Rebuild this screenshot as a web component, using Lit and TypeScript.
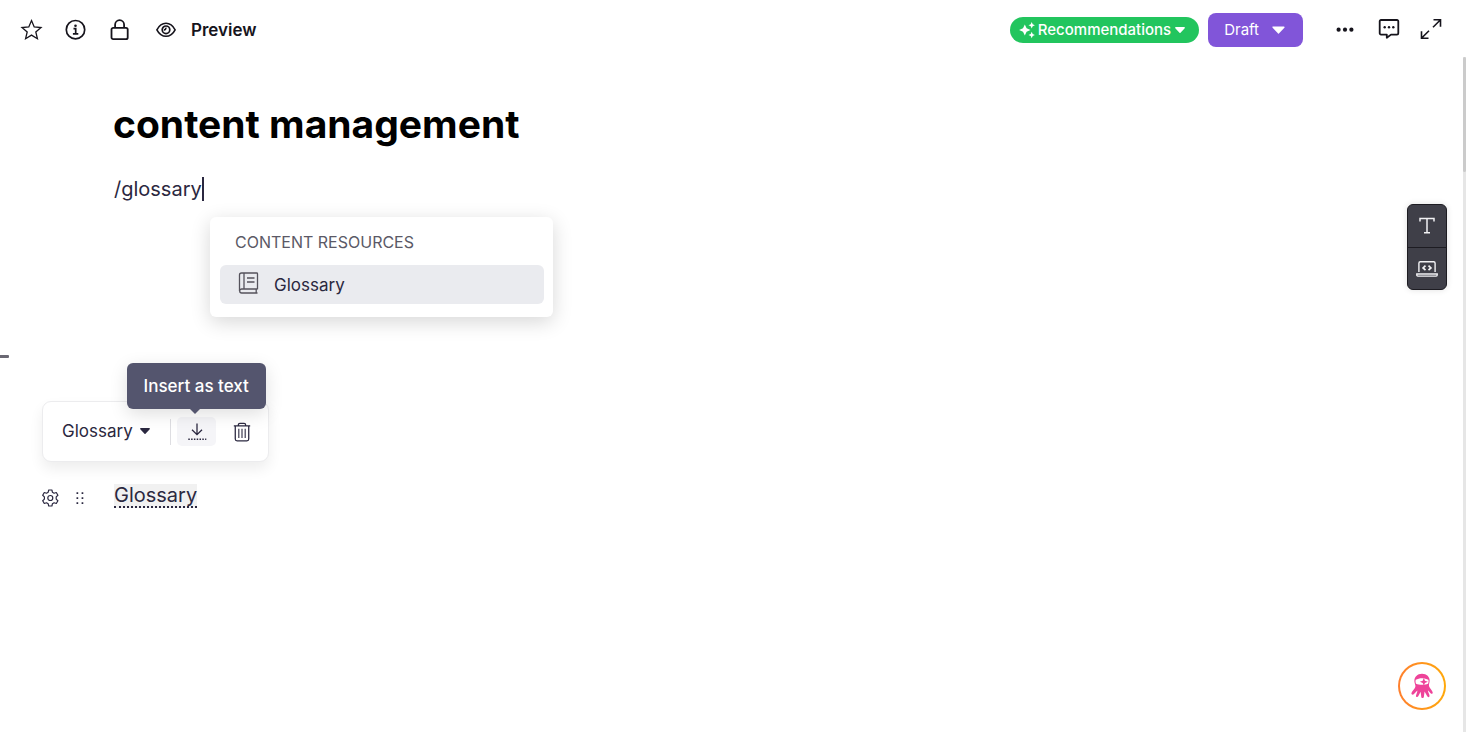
import { LitElement, html, css, svg } from "lit";
import { customElement, property, state } from "lit/decorators.js";

const glyphs: Record<string, { box: string; body: unknown }> = {
  star: {
    box: "0 0 22 22",
    body: svg`<path d="M10.500 1.600l2.700 6.300 6.800.6-5.200 4.500 1.600 6.700-5.900-3.600-5.900 3.600 1.600-6.700L1 8.500l6.800-.6z" stroke-width="1.300"/>`,
  },
  info: {
    box: "0 0 22 22",
    body: svg`<circle cx="10.500" cy="10.700" r="9.200" stroke-width="1.700"/><path d="M8.500 9.700h2.200v5M7.900 14.800h5.400" stroke-width="1.700"/><circle cx="10.500" cy="6.700" r="1.300" fill="currentColor" stroke="none"/>`,
  },
  lock: {
    box: "0 0 22 22",
    body: svg`<rect x="2.500" y="8.800" width="16.200" height="11.400" rx="1.700" stroke-width="1.800"/><path d="M6.100 8.700V5.700a4.500 4.500 0 0 1 9 0v3" stroke-width="1.800"/>`,
  },
  eye: {
    box: "0 0 22 22",
    body: svg`<path d="M1.900 10.800C4 6.800 7.200 4.300 11 4.300s7 2.500 9.100 6.500c-2.100 4-5.300 6.500-9.100 6.500s-7-2.500-9.100-6.500z" stroke-width="1.600"/><circle cx="11" cy="10.800" r="3.800" stroke-width="1.700"/><path d="M10.700 8.600a1.600 1.600 0 0 1-1.900 2.200" stroke-width="1.600"/>`,
  },
  sparkle: {
    box: "0 0 16 16",
    body: svg`<g fill="currentColor" stroke="none"><path d="M5.800 2.400l1.800 3.900L11.500 8 7.600 9.700 5.800 13.600 4 9.700.1 8 4 6.300z"/><path d="M12.700 0l1 2.200 2.200 1-2.200 1-1 2.200-1-2.200-2.200-1 2.200-1zM12.700 9.800l1 2.200 2.200 1-2.200 1-1 2.200-1-2.200-2.200-1 2.200-1z"/></g>`,
  },
  caret: {
    box: "0 0 12 8",
    body: svg`<path d="M1.800 1.800h8.400L6 6.200z" fill="currentColor" stroke-width="1.400" stroke-linejoin="round"/>`,
  },
  dots: {
    box: "0 0 22 22",
    body: svg`<g fill="currentColor" stroke="none"><circle cx="4.600" cy="10.700" r="2.100"/><circle cx="11" cy="10.700" r="2.100"/><circle cx="17.400" cy="10.700" r="2.100"/></g>`,
  },
  comment: {
    box: "-1 1 22 22",
    body: svg`<path d="M3 2h16a1.300 1.300 0 0 1 1.300 1.300v12A1.300 1.300 0 0 1 19 16.600h-6l-4.200 3.200v-3.200H3a1.300 1.300 0 0 1-1.300-1.300v-12A1.300 1.300 0 0 1 3 2z" stroke-width="1.800" stroke-linejoin="round"/><g fill="currentColor" stroke="none"><circle cx="6.700" cy="9.300" r="1.200"/><circle cx="11" cy="9.300" r="1.200"/><circle cx="15.300" cy="9.300" r="1.200"/></g>`,
  },
  expand: {
    box: "0 1 22 22",
    body: svg`<path d="M13.500 1.800h7v7M20.300 2L13 9.300M8.500 20.200h-7v-7M1.700 20L9 12.700" stroke-width="1.600"/>`,
  },
  book: {
    box: "0 2 20 22",
    body: svg`<path d="M19 17.300V1.800a.8.8 0 0 0-.8-.8H3a2 2 0 0 0-2 2v16M5.500 1v16M19 17H3.200a2 2 0 0 0 0 4H19M17.700 17v4M8.500 6h7.500M8.500 10h7.500" stroke-width="1.300"/>`,
  },
  insert: {
    box: "-1 0 20 20",
    body: svg`<path d="M10 1.500v11M5 7.700l5 4.900 5-4.900" stroke-width="1.300"/><path d="M1.300 17.300h18" stroke-width="1.600" stroke-dasharray="1.500 1.300"/>`,
  },
  trash: {
    box: "0 0 20 22",
    body: svg`<path d="M1 4.200h18M6 4V3.200A1.700 1.700 0 0 1 7.700 1.500h4.600A1.700 1.700 0 0 1 14 3.200V4M2.600 4.500v14.300a2 2 0 0 0 2 2h10.800a2 2 0 0 0 2-2V4.500" stroke-width="1.400"/><path d="M6.500 7.500v10M10 7.500v10M13.500 7.500v10" stroke-width="1.200"/>`,
  },
  gear: {
    box: "0 0 18 18",
    body: svg`<path d="M7.700 1h3.200l.5 2.200 1.700 1 2.200-.7 1.600 2.800-1.700 1.600v2.200l1.700 1.600-1.600 2.800-2.200-.7-1.700 1-.5 2.200H7.700l-.5-2.200-1.700-1-2.200.7-1.600-2.800 1.700-1.600V7.900L1.700 6.300l1.600-2.800 2.200.7 1.700-1z" stroke-width="1.200" stroke-linejoin="round"/><circle cx="9.300" cy="9" r="2.500" stroke-width="1.200"/>`,
  },
  grip: {
    box: "0 0 8 14",
    body: svg`<path d="M.5 1.200h1.700v1.700H.5zM5.600 1.200h1.700v1.700H5.600zM.5 6.200h1.700v1.700H.5zM5.600 6.200h1.700v1.700H5.600zM.5 11.200h1.700v1.700H.5zM5.600 11.200h1.700v1.700H5.600z" fill="currentColor" stroke="none"/>`,
  },
  type: {
    box: "0 0 22 22",
    body: svg`<path d="M4 6.500V3.500h14v3M11 3.500v14M8 17.700h6" stroke-width="1.500"/>`,
  },
  laptop: {
    box: "0 0 22 22",
    body: svg`<path d="M2.900 14V5.200a1.400 1.400 0 0 1 1.400-1.400h13.400a1.400 1.400 0 0 1 1.400 1.400V14M.8 16h20.400v1.100a1 1 0 0 1-1 1H1.800a1 1 0 0 1-1-1z" stroke-width="1.400"/><path d="M9.500 7.700L7.100 9.900l2.400 2.200M12.500 7.700l2.400 2.200-2.400 2.200" stroke-width="1.700"/>`,
  },
  mascot: {
    box: "0 0 24 28",
    body: svg`<path d="M12 .6c5 0 8.700 3.400 8.300 8-.2 2.600-1.200 4.300-.4 6.200.7 1.800 3.400 4 3.800 6.200.2 1.400-1.400 2-2.300.9l-3-3.400c.1 2.500 2.200 4.700 1.800 6.700-.3 1.300-1.900 1.300-2.500.1L14.800 20l-.8 6c-.3 1.600-2.600 1.600-2.800 0l-.7-5.800-2.600 5.100c-.6 1.200-2.600.9-2.500-.5.2-2 1.700-3.900 1.500-6l-3.900 4.300c-1.200 1-2.900.1-2.500-1.400.6-2 3.600-4.600 4.200-6.600.6-1.900-.9-3.600-1-6.100C3.400 4 7 .6 12 .6z" fill="#ee4399" stroke="none"/><path d="M5.200 7.300C9 5 15 5 18.900 7.300c.5 1.600.3 3-.3 4.200-3.500 1.500-9.600 1.500-13.100 0-.6-1.200-.8-2.600-.3-4.200z" fill="#fff" stroke="none"/><path d="M14 5.100l1.200 3.100 3.200 1.200-3.200 1.200-1.200 3.100-1.200-3.100-3.200-1.200 3.200-1.200z" fill="#ee4399" stroke="none"/>`,
  },
};

@customElement("ui-icon")
export class UiIcon extends LitElement {
  @property() name = "";

  static styles = css`
    :host {
      display: inline-flex;
      width: 22px;
      height: 22px;
      flex: none;
    }
    .glyph {
      width: 100%;
      height: 100%;
      overflow: visible;
      fill: none;
      stroke: currentColor;
    }
  `;

  render() {
    const g = glyphs[this.name];
    return html`<svg class="glyph" viewBox=${g.box} aria-hidden="true">${g.body}</svg>`;
  }
}

@customElement("app-root")
export class AppRoot extends LitElement {
  @state() private starred = false;

  static styles = css`
    :host {
      display: flex;
      flex-direction: column;
      position: relative;
      min-height: 100vh;
      box-sizing: border-box;
      background: #fff;
      color: #2b2840;
      font-family: Inter, "Liberation Sans", sans-serif;
      font-size: 17px;
      line-height: 24px;
    }
    * {
      box-sizing: border-box;
    }
    button {
      display: inline-flex;
      align-items: center;
      justify-content: center;
      margin: 0;
      padding: 0;
      border: 0;
      background: none;
      color: inherit;
      font: inherit;
      cursor: pointer;
    }
    .bar {
      display: flex;
      justify-content: space-between;
      align-items: center;
      height: 57px;
      padding: 2px 24px 0 21px;
      color: #16141c;
    }
    .group {
      display: flex;
      align-items: center;
    }
    .left {
      gap: 22px;
    }
    .right {
      gap: 21px;
    }
    .pills {
      display: flex;
      align-items: center;
      gap: 9px;
      margin-right: 10px;
    }
    .preview {
      gap: 14px;
      margin-left: 2px;
      font-weight: 600;
    }
    .recommend {
      height: 26px;
      padding: 0 13px 0 9px;
      gap: 3px;
      border-radius: 13px;
      background: #22c55e;
      color: #fff;
      font-size: 15px;
      font-weight: 500;
    }
    .recommend .spark {
      width: 16px;
      height: 16px;
    }
    .draft {
      height: 34px;
      padding: 0 17px 0 16px;
      gap: 12px;
      border-radius: 8px;
      background: #8155d9;
      color: #fff;
      font-size: 15px;
    }
    .caret {
      width: 12px;
      height: 8px;
    }
    .draft .caret {
      width: 15px;
      height: 10px;
    }
    .page {
      display: flex;
      flex: 1;
    }
    .editor {
      flex: 1;
      min-width: 0;
      padding: 43px 0 0 113px;
    }
    .scroll {
      width: 3px;
      background: #e6e6e6;
    }
    .thumb {
      height: 115px;
      border-radius: 2px;
      background: #cbcbcb;
    }
    .title {
      margin: 0;
      color: #000;
      font-size: 39px;
      line-height: 48px;
      font-weight: 700;
    }
    .line {
      display: flex;
      align-items: center;
      margin: 29px 0 0 1px;
      font-size: 20px;
    }
    .cursor {
      width: 2px;
      height: 24px;
      background: #2b2840;
    }
    .menu {
      width: 343px;
      margin: 16px 0 0 97px;
      padding: 10px 9px 13px 10px;
      border-radius: 6px;
      background: #fff;
      box-shadow: 0 5px 20px rgba(0, 0, 0, 0.16);
    }
    .heading {
      margin: 0;
      padding: 3px 15px 11px;
      color: #5b5966;
      font-size: 16px;
      font-weight: 400;
    }
    .option {
      justify-content: flex-start;
      width: 100%;
      height: 39px;
      padding: 0 18px;
      gap: 15px;
      border-radius: 6px;
      background: #eaebef;
    }
    .option .book {
      width: 21px;
      height: 22px;
      color: #55535c;
    }
    .toolbar {
      display: flex;
      align-items: center;
      width: 227px;
      height: 61px;
      margin: 84px 0 0 -71px;
      padding: 0 16px 0 19px;
      border: 1px solid #ececee;
      border-radius: 9px;
      background: #fff;
      box-shadow: 0 7px 14px rgba(0, 0, 0, 0.07);
    }
    .pick {
      gap: 6px;
      padding-bottom: 1px;
    }
    .rule {
      width: 1px;
      height: 26px;
      margin: 0 6px 0 19px;
      background: #dedee2;
    }
    .insert {
      position: relative;
      width: 39px;
      height: 29px;
      border-radius: 5px;
      background: #f5f5f8;
    }
    .insert ui-icon,
    .trash ui-icon {
      width: 20px;
      height: 20px;
    }
    .trash {
      margin-left: 16px;
    }
    .tip {
      position: absolute;
      right: -50px;
      bottom: 37px;
      width: 139px;
      padding: 11px 0;
      border-radius: 6px;
      background: #54556e;
      color: #fff;
      font-weight: 500;
      white-space: nowrap;
      box-shadow: 0 5px 18px rgba(0, 0, 0, 0.13);
    }
    .tip::after {
      content: "";
      position: absolute;
      top: 100%;
      left: 63px;
      border: 5px solid transparent;
      border-top-color: #54556e;
      border-bottom: 0;
    }
    .block {
      display: flex;
      align-items: center;
      margin: 22px 0 0 -72px;
    }
    .block .gear {
      width: 18px;
      height: 18px;
    }
    .block .grip {
      width: 8px;
      height: 14px;
    }
    .handles {
      display: flex;
      align-items: center;
      gap: 17px;
      width: 73px;
      padding-top: 4px;
    }
    .term {
      padding-top: 1px;
      border-bottom: 2px dotted #2b2840;
      background: #f1f1f1;
      color: inherit;
      font-size: 20px;
      line-height: 21px;
      text-decoration: none;
    }
    .dash {
      position: absolute;
      left: 0;
      top: 355px;
      width: 9px;
      height: 3px;
      border-radius: 0 1px 1px 0;
      background: #6a6873;
    }
    .rail {
      position: absolute;
      right: 19px;
      top: 204px;
      display: flex;
      flex-direction: column;
      width: 40px;
      overflow: hidden;
      border: 1px solid #1d1c22;
      border-radius: 6px;
      background: #3f3f48;
      color: #f2f2f4;
      box-shadow: 0 0 6px rgba(0, 0, 0, 0.12);
    }
    .tool {
      height: 42px;
    }
    .tool + .tool {
      border-top: 1px solid #1d1c22;
    }
    .assist {
      position: absolute;
      right: 20px;
      bottom: 22px;
      width: 48px;
      height: 48px;
      border: 2px solid transparent;
      border-radius: 50%;
      background:
        linear-gradient(#fff, #fff) padding-box,
        linear-gradient(90deg, #ff7f2e, #ffa90a) border-box;
    }
    .assist ui-icon {
      width: 22px;
      height: 26px;
    }
  `;

  render() {
    return html`
      <header class="bar">
        <div class="group left">
          <button aria-label="Favourite" aria-pressed=${this.starred} @click=${() => (this.starred = !this.starred)}>
            <ui-icon name="star"></ui-icon>
          </button>
          <button aria-label="Details"><ui-icon name="info"></ui-icon></button>
          <button aria-label="Lock"><ui-icon name="lock"></ui-icon></button>
          <button class="preview"><ui-icon name="eye"></ui-icon>Preview</button>
        </div>
        <div class="group right">
          <div class="pills">
            <button class="recommend">
              <ui-icon class="spark" name="sparkle"></ui-icon>Recommendations<ui-icon class="caret" name="caret"></ui-icon>
            </button>
            <button class="draft">Draft<ui-icon class="caret" name="caret"></ui-icon></button>
          </div>
          <button aria-label="More"><ui-icon name="dots"></ui-icon></button>
          <button aria-label="Comments"><ui-icon name="comment"></ui-icon></button>
          <button aria-label="Full screen"><ui-icon name="expand"></ui-icon></button>
        </div>
      </header>
      <div class="page">
        <main class="editor">
          <h1 class="title">content management</h1>
          <div class="line">/glossary<span class="cursor"></span></div>
          <section class="menu">
            <h2 class="heading">CONTENT RESOURCES</h2>
            <button class="option"><ui-icon class="book" name="book"></ui-icon>Glossary</button>
          </section>
          <div class="toolbar">
            <button class="pick">Glossary<ui-icon class="caret" name="caret"></ui-icon></button>
            <span class="rule"></span>
            <button class="insert" aria-labelledby="tip">
              <ui-icon name="insert"></ui-icon>
              <span class="tip" id="tip" role="tooltip">Insert as text</span>
            </button>
            <button class="trash" aria-label="Delete"><ui-icon name="trash"></ui-icon></button>
          </div>
          <div class="block">
            <div class="handles">
              <button aria-label="Block settings"><ui-icon class="gear" name="gear"></ui-icon></button>
              <button aria-label="Move block"><ui-icon class="grip" name="grip"></ui-icon></button>
            </div>
            <a class="term" href="#glossary">Glossary</a>
          </div>
        </main>
        <div class="scroll"><div class="thumb"></div></div>
      </div>
      <span class="dash"></span>
      <nav class="rail">
        <button class="tool" aria-label="Text"><ui-icon name="type"></ui-icon></button>
        <button class="tool" aria-label="Embed code"><ui-icon name="laptop"></ui-icon></button>
      </nav>
      <button class="assist" aria-label="Assistant"><ui-icon name="mascot"></ui-icon></button>
    `;
  }
}
